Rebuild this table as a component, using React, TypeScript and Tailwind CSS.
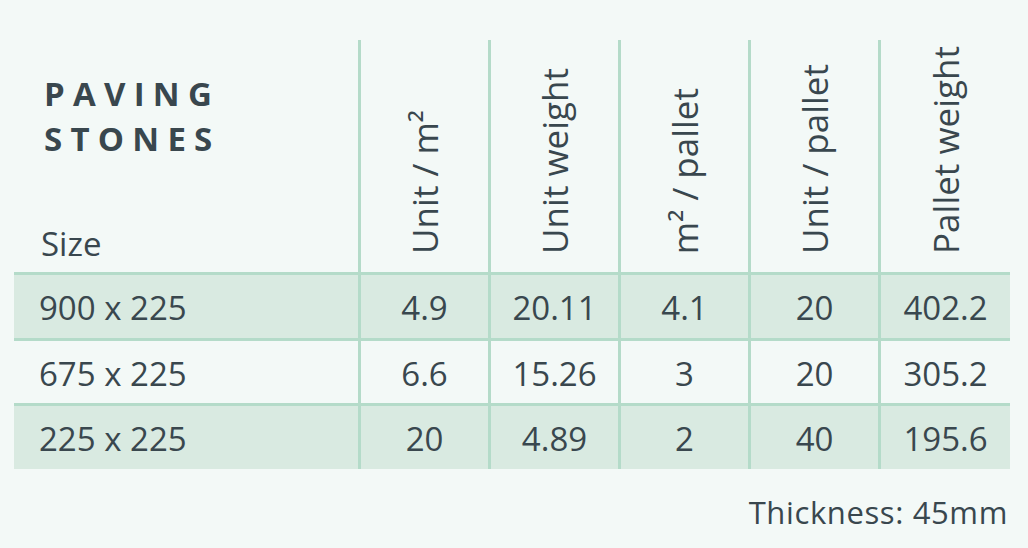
import React from 'react';

type Row = { size: string; values: string[] };

const headers = ['Unit / m²', 'Unit weight', 'm² / pallet', 'Unit / pallet', 'Pallet weight'];

const rows: Row[] = [
  { size: '900 x 225', values: ['4.9', '20.11', '4.1', '20', '402.2'] },
  { size: '675 x 225', values: ['6.6', '15.26', '3', '20', '305.2'] },
  { size: '225 x 225', values: ['20', '4.89', '2', '40', '195.6'] },
];

// column widths incl. 3px left border
const colWidths = ['w-[130px]', 'w-[130px]', 'w-[130px]', 'w-[130px]', 'w-[132px]'];

const App: React.FC = () => {
  return (
    <div
      className="w-full h-[548px] bg-[#f3f9f7] text-[#39474e] pt-[40px] pl-[14px]"
      style={{ fontFamily: '"Open Sans", "Noto Sans", sans-serif' }}
    >
      <div className="w-[996px]">
        {/* header */}
        <div className="flex h-[232px]">
          <div className="w-[344px] flex flex-col justify-between pl-[27px] pt-[31px] pb-[12px]">
            <div className="pl-[3px] text-[33px] font-bold leading-[45px] tracking-[0.25em]">
              PAVING
              <br />
              STONES
            </div>
            <div className="text-[33px] leading-none">Size</div>
          </div>
          {headers.map((h, i) => (
            <div
              key={h}
              className={`${colWidths[i]} border-l-[3px] border-[#b4dbc9] flex justify-center items-end pb-[18px]`}
            >
              <span className="[writing-mode:vertical-rl] rotate-180 text-[35px] leading-[1.2] whitespace-nowrap">
                {h}
              </span>
            </div>
          ))}
        </div>

        {/* body */}
        {rows.map((r, ri) => (
          <div
            key={r.size}
            className={`flex border-t-[3px] border-[#b4dbc9] ${ri === 1 ? 'h-[65px]' : 'h-[66px]'} ${
              ri % 2 === 0 ? 'bg-[#d9eae1]' : 'bg-transparent'
            }`}
          >
            <div className="w-[344px] flex items-center pl-[25px] pt-[2px] text-[33px] leading-none whitespace-nowrap">
              {r.size}
            </div>
            {r.values.map((v, i) => (
              <div
                key={i}
                className={`${colWidths[i]} border-l-[3px] border-[#b4dbc9] flex items-center justify-center pt-[2px] text-[33px] leading-none`}
              >
                {v}
              </div>
            ))}
          </div>
        ))}

        <div className="mt-[28px] pr-[2px] text-right text-[31px] leading-none tracking-[0.02em]">
          Thickness: 45mm
        </div>
      </div>
    </div>
  );
};

export default App;
